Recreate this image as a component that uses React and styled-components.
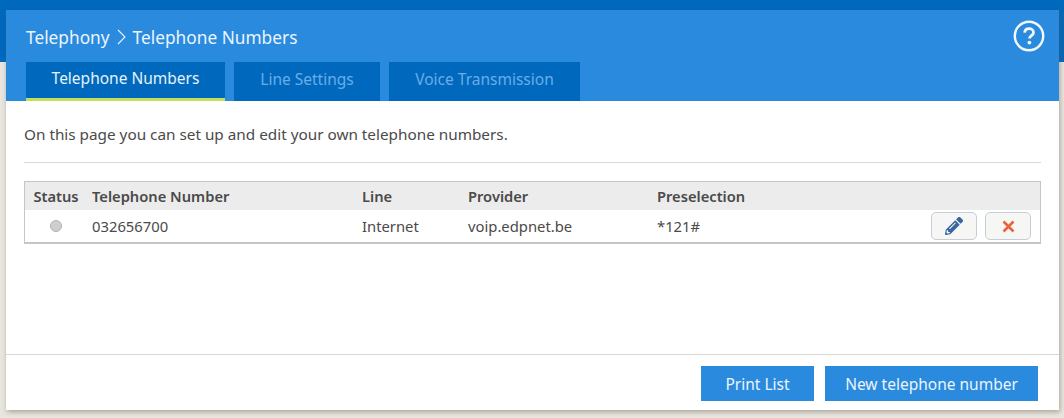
import React from "react";
import styled, { createGlobalStyle } from "styled-components";
import { FaPencilAlt } from "react-icons/fa";

const Global = createGlobalStyle`
  html, body { margin: 0; padding: 0; }
  body { font-family: "Noto Sans", "Open Sans", sans-serif; color: #4a4a4a; }
`;

const Page = styled.div`
  box-sizing: border-box;
  width: 1064px;
  height: 418px;
  padding: 10px 5px 8px 6px;
  background: linear-gradient(#0069bd 62px, #e9e6df 62px);
`;

const Panel = styled.div`
  display: flex;
  flex-direction: column;
  height: 400px;
  background: #fff;
  box-shadow: 1px 2px 5px rgba(90, 85, 70, 0.45);
`;

const Header = styled.header`
  box-sizing: border-box;
  height: 91px;
  padding: 0 14px 0 20px;
  background: #2a8ade;
  display: flex;
  flex-direction: column;
`;

const TitleRow = styled.div`
  height: 52px;
  display: flex;
  align-items: center;
  justify-content: space-between;
  color: #eaf5fd;
  font-size: 17.3px;
`;

const Crumbs = styled.div`
  display: flex;
  align-items: center;
  gap: 7px;
  padding-top: 2px;
`;

const Tabs = styled.nav`
  display: flex;
  gap: 9px;
`;

const Tab = styled.div`
  box-sizing: border-box;
  width: ${(p) => p.$width}px;
  height: 39px;
  padding-bottom: ${(p) => (p.$active ? 4 : 5)}px;
  background: #0069bd;
  display: flex;
  align-items: center;
  justify-content: center;
  font-size: 15.5px;
  color: ${(p) => (p.$active ? "#e6f3fb" : "#68ade8")};
  border-bottom: ${(p) => (p.$active ? "3px solid #c4dd5c" : "none")};
`;

const Body = styled.main`
  flex: 1;
  padding: 0 18px;
`;

const Intro = styled.p`
  margin: 0;
  height: 62px;
  display: flex;
  align-items: center;
  padding-top: 5px;
  box-sizing: border-box;
  border-bottom: 1px solid #d8d8d8;
  font-size: 15.3px;
`;

const Table = styled.div`
  margin-top: 18px;
  border: 1px solid #c6c6c6;
  border-bottom-width: 2px;
`;

const Row = styled.div`
  display: grid;
  grid-template-columns: 67px 270px 106px 189px 1fr;
  align-items: center;
  height: ${(p) => p.$height}px;
  font-size: ${(p) => (p.$head ? 14.7 : 14.8)}px;
  font-weight: ${(p) => (p.$head ? 600 : 400)};
  background: ${(p) => (p.$head ? "#ececec" : "#fff")};
`;

const StatusCell = styled.div`
  display: flex;
  justify-content: center;
  padding-right: 5px;
`;

const Dot = styled.span`
  width: 12px;
  height: 12px;
  box-sizing: border-box;
  border-radius: 50%;
  background: #cecece;
  border: 1px solid #b4b4b4;
`;

const Actions = styled.div`
  display: flex;
  align-items: center;
  gap: 8px;
  min-width: 0;
`;

const Preselect = styled.span`
  flex: 1;
`;

const IconButton = styled.button`
  box-sizing: border-box;
  width: 46px;
  height: 28px;
  padding: 0;
  margin-right: ${(p) => p.$end || 0}px;
  display: flex;
  align-items: center;
  justify-content: center;
  background: #f6f6f4;
  border: 1px solid #c5ced6;
  border-radius: 5px;
`;

const Footer = styled.footer`
  box-sizing: border-box;
  height: 56px;
  padding: 11px 21px 9px 0;
  border-top: 1px solid #d8d6d4;
  display: flex;
  justify-content: flex-end;
  gap: 11px;
`;

const Primary = styled.button`
  width: ${(p) => p.$width}px;
  height: 35px;
  border: none;
  padding: 0;
  background: #2a8ade;
  color: #eaf5fd;
  font-family: inherit;
  font-size: 15.5px;
`;

function HelpIcon() {
  return (
    <svg width="32" height="32" viewBox="0 0 32 32" fill="none">
      <circle cx="16" cy="16" r="14.2" stroke="#f2f9fe" strokeWidth="2.4" />
      <path d="M11.6 12.6c.3-2.6 2.2-3.9 4.5-3.9 2.5 0 4.4 1.5 4.4 3.7 0 3.2-4 3.2-4 6.2" stroke="#f2f9fe" strokeWidth="2.8" />
      <circle cx="16.4" cy="22.6" r="1.9" fill="#f2f9fe" />
    </svg>
  );
}

function Chevron() {
  return (
    <svg width="9" height="16" viewBox="0 0 9 16" fill="none">
      <path d="M1 1l7 7-7 7" stroke="#eaf5fd" strokeWidth="1.1" />
    </svg>
  );
}

function CrossIcon() {
  return (
    <svg width="13" height="13" viewBox="0 0 13 13" fill="none">
      <path d="M1.5 1.5l10 10M11.5 1.5l-10 10" stroke="#e8643f" strokeWidth="2.6" />
    </svg>
  );
}

export default function App() {
  return (
    <Page>
      <Global />
      <Panel>
        <Header>
          <TitleRow>
            <Crumbs>
              <span>Telephony</span>
              <Chevron />
              <span>Telephone Numbers</span>
            </Crumbs>
            <HelpIcon />
          </TitleRow>
          <Tabs>
            <Tab $active $width={199}>Telephone Numbers</Tab>
            <Tab $width={146}>Line Settings</Tab>
            <Tab $width={191}>Voice Transmission</Tab>
          </Tabs>
        </Header>
        <Body>
          <Intro>On this page you can set up and edit your own telephone numbers.</Intro>
          <Table>
            <Row $head $height={28}>
              <StatusCell>Status</StatusCell>
              <div>Telephone Number</div>
              <div>Line</div>
              <div>Provider</div>
              <div>Preselection</div>
            </Row>
            <Row $height={32}>
              <StatusCell><Dot /></StatusCell>
              <div>032656700</div>
              <div>Internet</div>
              <div>voip.edpnet.be</div>
              <Actions>
                <Preselect>*121#</Preselect>
                <IconButton aria-label="Edit"><FaPencilAlt size={18} color="#3a669f" /></IconButton>
                <IconButton aria-label="Delete" $end={9}><CrossIcon /></IconButton>
              </Actions>
            </Row>
          </Table>
        </Body>
        <Footer>
          <Primary $width={113}>Print List</Primary>
          <Primary $width={213}>New telephone number</Primary>
        </Footer>
      </Panel>
    </Page>
  );
}
